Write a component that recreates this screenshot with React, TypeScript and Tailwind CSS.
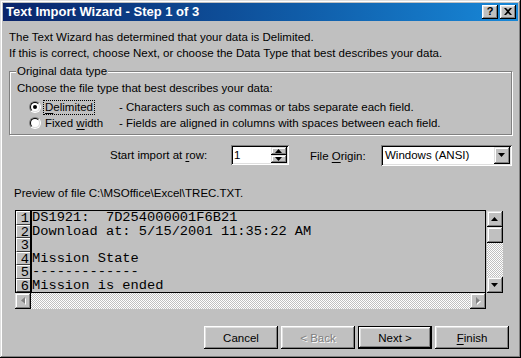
import React from "react";

const raised =
  "shadow-[inset_-1px_-1px_0_#000,inset_1px_1px_0_#fff,inset_-2px_-2px_0_#808080,inset_2px_2px_0_#dfdfdf]";
const raisedSb =
  "shadow-[inset_-1px_-1px_0_#000,inset_1px_1px_0_#dfdfdf,inset_-2px_-2px_0_#808080,inset_2px_2px_0_#fff]";
const sunken =
  "shadow-[inset_1px_1px_0_#808080,inset_-1px_-1px_0_#fff,inset_2px_2px_0_#000,inset_-2px_-2px_0_#dfdfdf]";
const dither =
  "bg-[repeating-conic-gradient(#ffffff_0%_25%,#c0c0c0_0%_50%)] bg-[length:2px_2px]";

function Radio({ checked }: { checked?: boolean }) {
  return (
    <div className="w-[12px] h-[12px] rounded-full border border-t-[#808080] border-l-[#808080] border-r-white border-b-white shrink-0">
      <div className="w-full h-full rounded-full border border-t-black border-l-black border-r-[#dfdfdf] border-b-[#dfdfdf] bg-white flex items-center justify-center">
        {checked && <div className="w-[4px] h-[4px] rounded-full bg-black" />}
      </div>
    </div>
  );
}

function Tri({ dir, color = "#000", shadow }: { dir: "up" | "down" | "left" | "right"; color?: string; shadow?: boolean }) {
  const paths: Record<string, string> = {
    up: "M3.5 0 L7 4 L0 4 Z",
    down: "M0 0 L7 0 L3.5 4 Z",
    left: "M4 0 L4 7 L0 3.5 Z",
    right: "M0 0 L4 3.5 L0 7 Z",
  };
  const vertical = dir === "up" || dir === "down";
  const w = vertical ? 7 : 4;
  const h = vertical ? 4 : 7;
  return (
    <svg width={w + 1} height={h + 1} viewBox={`0 0 ${w + 1} ${h + 1}`}>
      {shadow && <path d={paths[dir]} fill="#fff" transform="translate(1 1)" />}
      <path d={paths[dir]} fill={color} />
    </svg>
  );
}

function ArrowBtn({ dir, disabled, h = "h-[16px]" }: { dir: "up" | "down" | "left" | "right"; disabled?: boolean; h?: string }) {
  return (
    <div className={`w-[16px] ${h} bg-[#c0c0c0] ${raisedSb} flex items-center justify-center shrink-0`}>
      <Tri dir={dir} color={disabled ? "#808080" : "#000"} shadow={disabled} />
    </div>
  );
}

function Btn({ children, def, disabled }: { children: React.ReactNode; def?: boolean; disabled?: boolean }) {
  const inner = (
    <div
      className={`w-full h-full bg-[#c0c0c0] ${raised} flex items-center justify-center ${
        disabled ? "text-[#808080] [text-shadow:1px_1px_0_#fff]" : "text-black"
      }`}
    >
      {children}
    </div>
  );
  return def ? (
    <div className="w-[74px] h-[23px] border border-black">{inner}</div>
  ) : (
    <div className="w-[74px] h-[23px]">{inner}</div>
  );
}

const rows = [
  "DS1921:  7D254000001F6B21",
  "Download at: 5/15/2001 11:35:22 AM",
  "",
  "Mission State",
  "-------------",
  "Mission is ended",
];

export default function App() {
  return (
    <div
      className="w-[521px] h-[358px] bg-[#c0c0c0] p-[3px] flex flex-col overflow-hidden text-[11.5px] leading-[16px] text-black shadow-[inset_-1px_-1px_0_#000,inset_1px_1px_0_#dfdfdf,inset_-2px_-2px_0_#808080,inset_2px_2px_0_#fff]"
      style={{ fontFamily: '"Liberation Sans", Arial, sans-serif' }}
    >
      {/* Title bar */}
      <div className="h-[18px] bg-linear-to-r from-[#0a246a] to-[#1888d8] flex items-center justify-between pl-[3px] pr-[2px] shrink-0">
        <span className="text-white font-bold text-[13px]">Text Import Wizard - Step 1 of 3</span>
        <div className="flex items-center gap-[2px]">
          <div className={`w-[16px] h-[14px] bg-[#c0c0c0] ${raised} flex items-center justify-center font-bold text-[11px] leading-none pb-[1px]`}>
            ?
          </div>
          <div className={`w-[16px] h-[14px] bg-[#c0c0c0] ${raised} flex items-center justify-center pb-[1px]`}>
            <svg width="8" height="7" viewBox="0 0 8 7">
              <path d="M0 0 L2 0 L4 2 L6 0 L8 0 L5 3.5 L8 7 L6 7 L4 5 L2 7 L0 7 L3 3.5 Z" fill="#000" />
            </svg>
          </div>
        </div>
      </div>

      {/* Body */}
      <div className="flex flex-col px-[6px]">
        <div className="mt-[8px]">
          <div>The Text Wizard has determined that your data is Delimited.</div>
          <div>If this is correct, choose Next, or choose the Data Type that best describes your data.</div>
        </div>

        {/* Group box */}
        <div className="relative mt-[10px] h-[64px] border border-[#808080] shadow-[1px_1px_0_#fff,inset_1px_1px_0_#fff]">
          <span className="absolute left-[6px] top-[-9px] bg-[#c0c0c0] px-[1px]">Original data type</span>
          <div className="pl-[7px] pt-[8px]">Choose the file type that best describes your data:</div>
          <div className="flex items-center h-[16px] mt-[3px] pl-[19px]">
            <Radio checked />
            <div className="w-[76px] ml-[2px] flex">
              <span className="border border-dotted border-black px-[1px] leading-[13px]">
                <span className="underline underline-offset-2">D</span>elimited
              </span>
            </div>
            <span>- Characters such as commas or tabs separate each field.</span>
          </div>
          <div className="flex items-center h-[16px] pl-[19px]">
            <Radio />
            <div className="w-[76px] ml-[2px] flex">
              <span className="px-[2px]">
                Fixed <span className="underline underline-offset-2">w</span>idth
              </span>
            </div>
            <span>- Fields are aligned in columns with spaces between each field.</span>
          </div>
        </div>

        {/* Import row + origin */}
        <div className="flex items-center h-[20px] mt-[10px]">
          <div className="ml-[101px] w-[121px]">
            Start import at <span className="underline underline-offset-2">r</span>ow:
          </div>
          <div className={`w-[58px] h-[20px] bg-white ${sunken} flex items-center pl-[3px] pr-[2px]`}>
            <span className="flex-1">1</span>
            <div className="flex flex-col">
              <ArrowBtn dir="up" h="h-[8px]" />
              <ArrowBtn dir="down" h="h-[8px]" />
            </div>
          </div>
          <div className="ml-[21px] w-[71px] pt-[2px]">
            File <span className="underline underline-offset-2">O</span>rigin:
          </div>
          <div className={`w-[131px] h-[21px] bg-white ${sunken} flex items-center pl-[4px] pr-[2px]`}>
            <span className="flex-1">Windows (ANSI)</span>
            <ArrowBtn dir="down" h="h-[17px]" />
          </div>
        </div>

        <div className="mt-[20px] ml-[5px]">Preview of file C:\MSOffice\Excel\TREC.TXT.</div>

        {/* Preview */}
        <div className="flex items-start mt-[9px] ml-[6px]">
          <div className="flex flex-col">
            <div
              className="w-[471px] h-[83px] border border-black overflow-hidden flex text-[13.7px]"
              style={{ fontFamily: '"Liberation Mono", "Courier New", monospace' }}
            >
              <div className="flex flex-col w-[16px] border-r-2 border-black shrink-0">
                {rows.map((_, i) => (
                  <div
                    key={i}
                    className="h-[13.5px] shrink-0 leading-[13.5px] text-right pr-[1px] border-t border-l border-white border-b border-b-[#404040] bg-[#c0c0c0]"
                  >
                    {i + 1}
                  </div>
                ))}
              </div>
              <div className="flex flex-col">
                {rows.map((r, i) => (
                  <div key={i} className="h-[13.5px] shrink-0 leading-[14px] whitespace-pre">
                    {r}
                  </div>
                ))}
              </div>
            </div>
            <div className={`w-[471px] h-[16px] flex ${dither}`}>
              <ArrowBtn dir="left" disabled />
              <div className="flex-1" />
              <ArrowBtn dir="right" disabled />
            </div>
          </div>
          <div className={`ml-[1px] mt-[1px] w-[16px] h-[82px] flex flex-col ${dither}`}>
            <ArrowBtn dir="up" />
            <div className={`w-[16px] h-[16px] bg-[#c0c0c0] ${raisedSb}`} />
            <div className="flex-1" />
            <ArrowBtn dir="down" />
          </div>
        </div>

        {/* Buttons */}
        <div className="flex justify-end gap-[3px] mt-[17px] pr-[3px]">
          <Btn>Cancel</Btn>
          <Btn disabled>&lt; Back</Btn>
          <Btn def>Next &gt;</Btn>
          <Btn>
            <span>
              <span className="underline underline-offset-2">F</span>inish
            </span>
          </Btn>
        </div>
      </div>
    </div>
  );
}
